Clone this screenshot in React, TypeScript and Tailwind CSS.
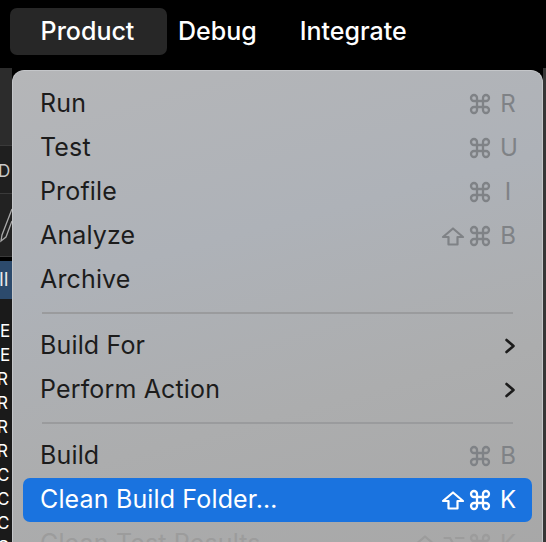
import React from 'react'

const CmdIcon = ({ className = '' }: { className?: string }) => (
  <svg viewBox="0 0 24 24" className={className} fill="none" stroke="currentColor" strokeWidth={2.3} strokeLinecap="round" strokeLinejoin="round">
    <path d="M15 6v12a3 3 0 1 0 3-3H6a3 3 0 1 0 3 3V6a3 3 0 1 0-3 3h12a3 3 0 1 0-3-3" />
  </svg>
)

const ShiftIcon = ({ className = '' }: { className?: string }) => (
  <svg viewBox="0 0 24 19" className={className} fill="none" stroke="currentColor" strokeWidth={2.2} strokeLinejoin="round">
    <path d="M12 1.5 L22 10 H16.5 V17.5 H7.5 V10 H2 Z" />
  </svg>
)

const OptIcon = ({ className = '' }: { className?: string }) => (
  <svg viewBox="0 0 22 18" className={className} fill="none" stroke="currentColor" strokeWidth={2.2} strokeLinecap="round">
    <path d="M1.5 3 H7 L14 15 H20.5 M13 3 H20.5" />
  </svg>
)

const Chevron = () => (
  <svg viewBox="0 0 12 16" className="h-[16px] w-[12px]" fill="none" stroke="currentColor" strokeWidth={2.6} strokeLinecap="round" strokeLinejoin="round">
    <path d="M2.5 2 L9.5 8 L2.5 14" />
  </svg>
)

type Item = {
  label: string
  keys?: string
  shift?: boolean
  opt?: boolean
  submenu?: boolean
  active?: boolean
  disabled?: boolean
}

function Shortcut({ item }: { item: Item }) {
  if (item.submenu) return <Chevron />
  if (!item.keys) return null
  return (
    <div className="flex items-center">
      {item.shift && <ShiftIcon className="mr-[6px] h-[19px] w-[24px]" />}
      {item.opt && <OptIcon className="mr-[6px] h-[18px] w-[22px]" />}
      <CmdIcon className="h-[24px] w-[24px] -mx-[3px]" />
      <span className="ml-[11px] w-[16px] text-center">{item.keys}</span>
    </div>
  )
}

function Row({ item }: { item: Item }) {
  const color = item.active
    ? 'bg-[#1a73df] text-white'
    : item.disabled
      ? 'text-[#9c9c9c]'
      : 'text-[#1c1c1c]'
  const keyColor = item.active ? 'text-white' : item.disabled ? 'text-[#9c9c9c]' : item.submenu ? 'text-[#1c1c1c]' : 'text-[#7f8286]'
  return (
    <div className={`mx-[10px] flex h-[44px] shrink-0 items-center justify-between rounded-[7px] pl-[17px] pr-[16px] ${color}`}>
      <span className="tracking-[0.15px]">{item.label}</span>
      <span className={`text-[24px] ${keyColor}`}>
        <Shortcut item={item} />
      </span>
    </div>
  )
}

const Separator = () => (
  <div className="flex h-[22px] shrink-0 items-center px-[29px]">
    <div className="h-[2px] w-full bg-[#9a9b9d]" />
  </div>
)

const groups: Item[][] = [
  [
    { label: 'Run', keys: 'R' },
    { label: 'Test', keys: 'U' },
    { label: 'Profile', keys: 'I' },
    { label: 'Analyze', keys: 'B', shift: true },
    { label: 'Archive' },
  ],
  [
    { label: 'Build For', submenu: true },
    { label: 'Perform Action', submenu: true },
  ],
  [
    { label: 'Build', keys: 'B' },
    { label: 'Clean Build Folder…', keys: 'K', shift: true, active: true },
    { label: 'Clean Test Results', keys: 'K', shift: true, opt: true, disabled: true },
  ],
]

function LeftStrip() {
  const letters = ['E', 'E', 'R', 'R', 'R', 'R', 'C', 'C', 'C', 'C']
  return (
    <div className="flex w-[12px] shrink-0 flex-col overflow-hidden text-[17px] leading-none">
      <div className="h-[77px] shrink-0 bg-[#2c2c2c]" />
      <div className="flex h-[48px] shrink-0 items-center border-t border-[#3a3a3a] bg-[#1f1f1f] pt-[4px] text-[#c8c8c8]">
        <span className="-ml-[2px]">D</span>
      </div>
      <div className="flex h-[64px] shrink-0 items-center border-y border-[#3a3a3a] bg-[#222]">
        <svg viewBox="0 0 12 40" className="h-[40px] w-[12px]" fill="none" stroke="#a9a9a9" strokeWidth={1.3}>
          <path d="M12 4 L2 30 L1 36 L6 32 L12 16" />
        </svg>
      </div>
      <div className="mt-[4px] flex h-[38px] shrink-0 items-center bg-[#2c4a6c] text-[#e8e8e8]">
        <span className="-ml-[1px] text-[18px]">II</span>
      </div>
      <div className="flex flex-1 flex-col bg-[#1a1a1a] pt-[20px] text-white">
        {letters.map((l, i) => (
          <div key={i} className="flex h-[24px] shrink-0 items-center">
            <span className={l === 'E' ? 'ml-[0px]' : '-ml-[3px]'}>{l}</span>
          </div>
        ))}
      </div>
    </div>
  )
}

export default function App() {
  return (
    <div className="flex h-[542px] w-[546px] flex-col overflow-hidden bg-black font-['Inter','Liberation_Sans',sans-serif]">
      <div className="flex h-[68px] shrink-0 items-start px-[10px] pt-[8px] text-[25px] font-medium text-white">
        <div className="flex h-[47px] w-[157px] items-center justify-center rounded-[7px] bg-[#272727] pr-[2px]">
          Product
        </div>
        <div className="flex h-[47px] items-center pl-[11px]">Debug</div>
        <div className="flex h-[47px] items-center pl-[43px]">Integrate</div>
      </div>
      <div className="flex min-h-0 flex-1">
        <LeftStrip />
        <div className="flex min-w-0 flex-1 flex-col pt-[2px]">
          <div className="flex flex-1 flex-col rounded-t-[12px] border border-b-0 border-[#c4c6c9] bg-[linear-gradient(165deg,#b5b6b8_0%,#aeb2b8_35%,#acadae_65%,#a7a7a7_100%)] pt-[11px] text-[25px]">
            {groups.map((g, gi) => (
              <React.Fragment key={gi}>
                {gi > 0 && <Separator />}
                {g.map((item) => (
                  <Row key={item.label} item={item} />
                ))}
              </React.Fragment>
            ))}
          </div>
        </div>
        <div className="w-[3px] shrink-0 bg-[#363636]" />
      </div>
    </div>
  )
}
